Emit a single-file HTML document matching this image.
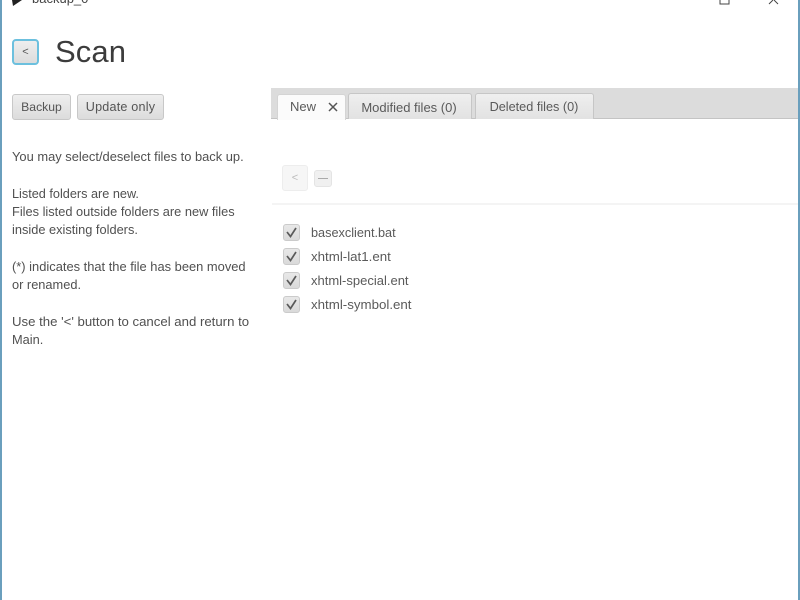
<!DOCTYPE html>
<html><head><meta charset="utf-8"><style>
html,body{margin:0;padding:0;width:800px;height:600px;overflow:hidden;background:#fff}
body{position:relative;font-family:"Liberation Sans",sans-serif;color:#444;filter:blur(0.35px)}
div{position:absolute;white-space:nowrap;box-sizing:border-box}
.btn{background:linear-gradient(#eee,#dcdcdc);border:1px solid #c8c8c8;border-radius:3px;font-size:13px;text-align:center;color:#555}
.t{font-size:13px;line-height:18px;color:#505050}
.tab{top:93px;height:26px;background:linear-gradient(#efefef,#e2e2e2);border:1px solid #c6c6c6;border-bottom:none;border-radius:3px 3px 0 0;font-size:13px;line-height:27px;text-align:center;color:#5a5a5a}
.cb{left:283px;width:17px;height:17px;background:linear-gradient(#e8e8e8,#dadada);border:1px solid #cbcbcb;border-radius:3px}
.f{left:311px;line-height:18px;color:#5a5a5a}
</style></head><body>
<div style="left:0;top:0;width:2px;height:600px;background:#6a9fbd"></div>
<div style="left:798px;top:0;width:2px;height:600px;background:#6a9fbd"></div>
<svg style="position:absolute;left:12px;top:0" width="14" height="7"><path d="M0 0H10L1 6Z" fill="#222"/></svg>
<div style="left:32px;top:-9px;font-size:13px;line-height:16px;color:#444">backup_0</div>
<svg style="position:absolute;left:715px;top:0" width="70" height="6"><path d="M5 0V4H14V0" fill="none" stroke="#444" stroke-width="1"/><path d="M54 4L58 0M63 4L59 0" stroke="#444" fill="none"/></svg>
<div class="btn" style="left:12px;top:39px;width:27px;height:26px;border:2px solid #6cc0de;border-radius:4px;font-size:11px;line-height:22px">&lt;</div>
<div style="left:55px;top:32px;font-size:31px;line-height:40px;letter-spacing:0.1px;color:#3c3c3c">Scan</div>
<div class="btn" style="left:12px;top:94px;width:59px;height:26px;line-height:25px;font-size:12.2px">Backup</div>
<div class="btn" style="left:77px;top:94px;width:87px;height:26px;line-height:25px;font-size:12.6px;letter-spacing:0.2px">Update only</div>
<div class="t" style="left:12px;top:148px;font-size:12.9px">You may select/deselect files to back up.</div>
<div class="t" style="left:12px;top:185px;font-size:12.7px">Listed folders are new.</div>
<div class="t" style="left:12px;top:203px;font-size:12.8px">Files listed outside folders are new files</div>
<div class="t" style="left:12px;top:221px;font-size:12.8px">inside existing folders.</div>
<div class="t" style="left:12px;top:258px;font-size:12.9px">(*) indicates that the file has been moved</div>
<div class="t" style="left:12px;top:276px;font-size:12.8px">or renamed.</div>
<div class="t" style="left:12px;top:313px;font-size:13.2px">Use the '&lt;' button to cancel and return to</div>
<div class="t" style="left:12px;top:331px;font-size:12.8px">Main.</div>
<div style="left:271px;top:88px;width:527px;height:31px;background:#dcdcdc;border-bottom:1px solid #c4c4c4"></div>
<div style="left:277px;top:94px;width:69px;height:26px;background:#fbfbfb;border:1px solid #d4d4d4;border-bottom:none;border-radius:3px 3px 0 0"></div>
<div style="left:290px;top:98px;font-size:13px;line-height:18px;color:#5a5a5a">New</div>
<svg style="position:absolute;left:328px;top:102px" width="10" height="10"><path d="M1 1L9 9M9 1L1 9" stroke="#555" stroke-width="1.500"/></svg>
<div class="tab" style="left:348px;width:124px;padding-right:2px">Modified files (0)</div>
<div class="tab" style="left:475px;width:119px;font-size:12.7px;padding-right:1px">Deleted files (0)</div>
<div style="left:282px;top:165px;width:26px;height:26px;background:#f6f6f6;border:1px solid #ededed;border-radius:3px;font-size:11px;line-height:25px;text-align:center;color:#bbb">&lt;</div>
<div style="left:314px;top:170px;width:18px;height:17px;background:#f0f0f0;border:1px solid #e4e4e4;border-radius:3px"></div>
<div style="left:318px;top:178px;width:10px;height:1px;background:#aaa"></div>
<div style="left:272px;top:203px;width:526px;height:2px;background:#f4f4f4"></div>
<div class="cb" style="top:224px"></div><div class="f" style="top:223.500px;font-size:12.7px">basexclient.bat</div>
<div class="cb" style="top:248px"></div><div class="f" style="top:247.500px;font-size:13.3px">xhtml-lat1.ent</div>
<div class="cb" style="top:272px"></div><div class="f" style="top:271.500px;font-size:13px">xhtml-special.ent</div>
<div class="cb" style="top:296px"></div><div class="f" style="top:295.500px;font-size:13.3px">xhtml-symbol.ent</div>
<svg style="position:absolute;left:283px;top:224px" width="17" height="90" fill="none" stroke="#5a5a5a" stroke-width="1.700"><path d="M4 8L7.500 12.500L13 4"/><path d="M4 32L7.500 36.500L13 28"/><path d="M4 56L7.500 60.500L13 52"/><path d="M4 80L7.500 84.500L13 76"/></svg>
</body></html>
